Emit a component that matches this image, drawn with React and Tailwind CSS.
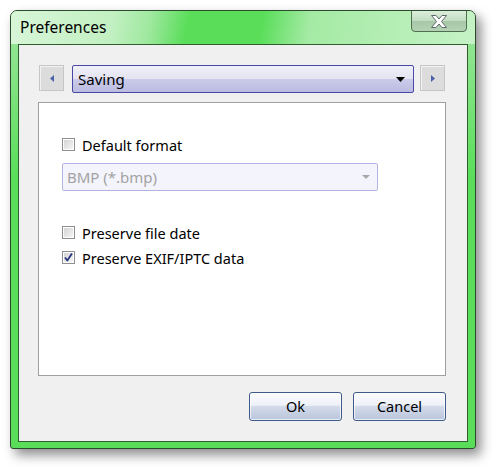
import React from "react";

const font = { fontFamily: '"Noto Sans", "Open Sans", sans-serif' };

function CheckBox({ checked }) {
  return (
    <div className="w-[13px] h-[13px] border border-[#8e8f8f] bg-white p-[1px] shrink-0">
      <div className="w-full h-full bg-gradient-to-br from-[#d4d4d4] to-[#f6f6f6] relative">
        {checked && (
          <svg className="absolute -left-[1px] -top-[1px]" width="11" height="11" viewBox="0 0 11 11">
            <path d="M2 5.5 L4.3 8.5 L9 1.5" fill="none" stroke="#26367e" strokeWidth="1.8" strokeLinejoin="round" />
          </svg>
        )}
      </div>
    </div>
  );
}

function ArrowBtn({ dir }) {
  return (
    <div className="w-[25px] h-[26px] border border-[#c6c6c6] bg-[#dcdcdc] flex items-center justify-center shadow-[inset_1px_1px_0_#f2f2f2]">
      <svg width="4" height="7" viewBox="0 0 4 7">
        {dir === "left" ? (
          <path d="M4 0 L0 3.5 L4 7 Z" fill="#4b62a8" />
        ) : (
          <path d="M0 0 L4 3.5 L0 7 Z" fill="#4b62a8" />
        )}
      </svg>
    </div>
  );
}

function Row({ checked, label }) {
  return (
    <div className="flex items-center gap-[7px] h-[20px]">
      <CheckBox checked={checked} />
      <span className="text-[14.5px] text-black leading-none relative top-[1px]">{label}</span>
    </div>
  );
}

function DlgButton({ children }) {
  return (
    <div className="w-[93px] h-[29px] rounded-[3px] border border-[#3d5a8a] flex items-center justify-center text-[14.5px] text-black bg-[linear-gradient(to_bottom,#fbfcfe_0%,#eef1f8_45%,#d3dbea_50%,#b9c5dc_100%)] shadow-[inset_0_0_0_1px_rgba(255,255,255,0.7)]">
      {children}
    </div>
  );
}

export default function App() {
  return (
    <div className="w-[493px] h-[468px] bg-white relative" style={font}>
      <div className="absolute left-[10px] top-[10px] w-[466px] h-[439px] rounded-t-[7px] rounded-b-[3px] border border-[#2c4a2c] bg-[linear-gradient(to_bottom,#9fe69f_0%,#5ade5a_38%,#5ade5a_100%)] shadow-[5px_6px_12px_rgba(0,0,0,0.45)] flex flex-col overflow-hidden">
        {/* title bar */}
        <div className="h-[33px] shrink-0 relative flex items-start bg-[linear-gradient(100deg,#d8f6d8_0%,#c2f0c2_22%,#9fe89f_30%,#5ade5a_38%,#5ade5a_54%,#a4eaa4_64%,#c6f2c6_100%)]">
          <span className="ml-[9px] mt-[6px] text-[15.5px] text-black leading-[20px]">Preferences</span>
          <div className="absolute right-[8px] -top-[1px] w-[56px] h-[22px] rounded-b-[4px] border border-[#4f6f4f] bg-[linear-gradient(to_bottom,#dcefdc_0%,#c2dcc2_48%,#a8c6a8_52%,#b4d2b4_100%)] flex items-center justify-center">
            <svg width="20" height="15" viewBox="0 0 20 15">
              <path d="M2.5 1.5 L7 1.5 L10 5 L13 1.5 L17.5 1.5 L12.5 7.5 L17.5 13.5 L13 13.5 L10 10 L7 13.5 L2.5 13.5 L7.5 7.5 Z" fill="#ffffff" stroke="#5d6b6d" strokeWidth="1" strokeLinejoin="round" />
            </svg>
          </div>
        </div>
        {/* client */}
        <div className="mx-[7px] mb-[6px] flex-1 border border-[#2f5f2f] bg-[#f0f0f0] flex flex-col pl-[20px] pt-[20px]">
          <div className="flex items-start">
            <ArrowBtn dir="left" />
            <div className="ml-[8px] w-[342px] h-[28px] rounded-[2px] border border-[#4a48a6] bg-[linear-gradient(to_bottom,#f0f0f8_0%,#e4e4f2_48%,#cacaea_52%,#bcbce2_100%)] flex items-center justify-between pl-[5px] pr-[8px]">
              <span className="text-[15px] text-black">Saving</span>
              <svg width="9" height="5" viewBox="0 0 9 5">
                <path d="M0 0 L9 0 L4.5 5 Z" fill="#000" />
              </svg>
            </div>
            <div className="ml-[6px]">
              <ArrowBtn dir="right" />
            </div>
          </div>
          <div className="mt-[9px] -ml-[1px] w-[408px] h-[274px] border border-[#a0a0a0] bg-white flex flex-col pl-[23px] pt-[31px]">
            <Row label="Default format" />
            <div className="mt-[9px] w-[316px] h-[28px] rounded-[2px] border border-[#b3b3e2] bg-[#f4f4fc] flex items-center justify-between pl-[4px] pr-[7px]">
              <span className="text-[15px] text-[#a3a3a3]">BMP (*.bmp)</span>
              <svg width="8" height="4" viewBox="0 0 8 4">
                <path d="M0 0 L8 0 L4 4 Z" fill="#a8a8a8" />
              </svg>
            </div>
            <div className="mt-[31px]">
              <Row label="Preserve file date" />
            </div>
            <div className="mt-[5px]">
              <Row checked label="Preserve EXIF/IPTC data" />
            </div>
          </div>
          <div className="mt-[16px] w-[407px] flex justify-end gap-[11px]">
            <DlgButton>Ok</DlgButton>
            <DlgButton>Cancel</DlgButton>
          </div>
        </div>
      </div>
    </div>
  );
}
